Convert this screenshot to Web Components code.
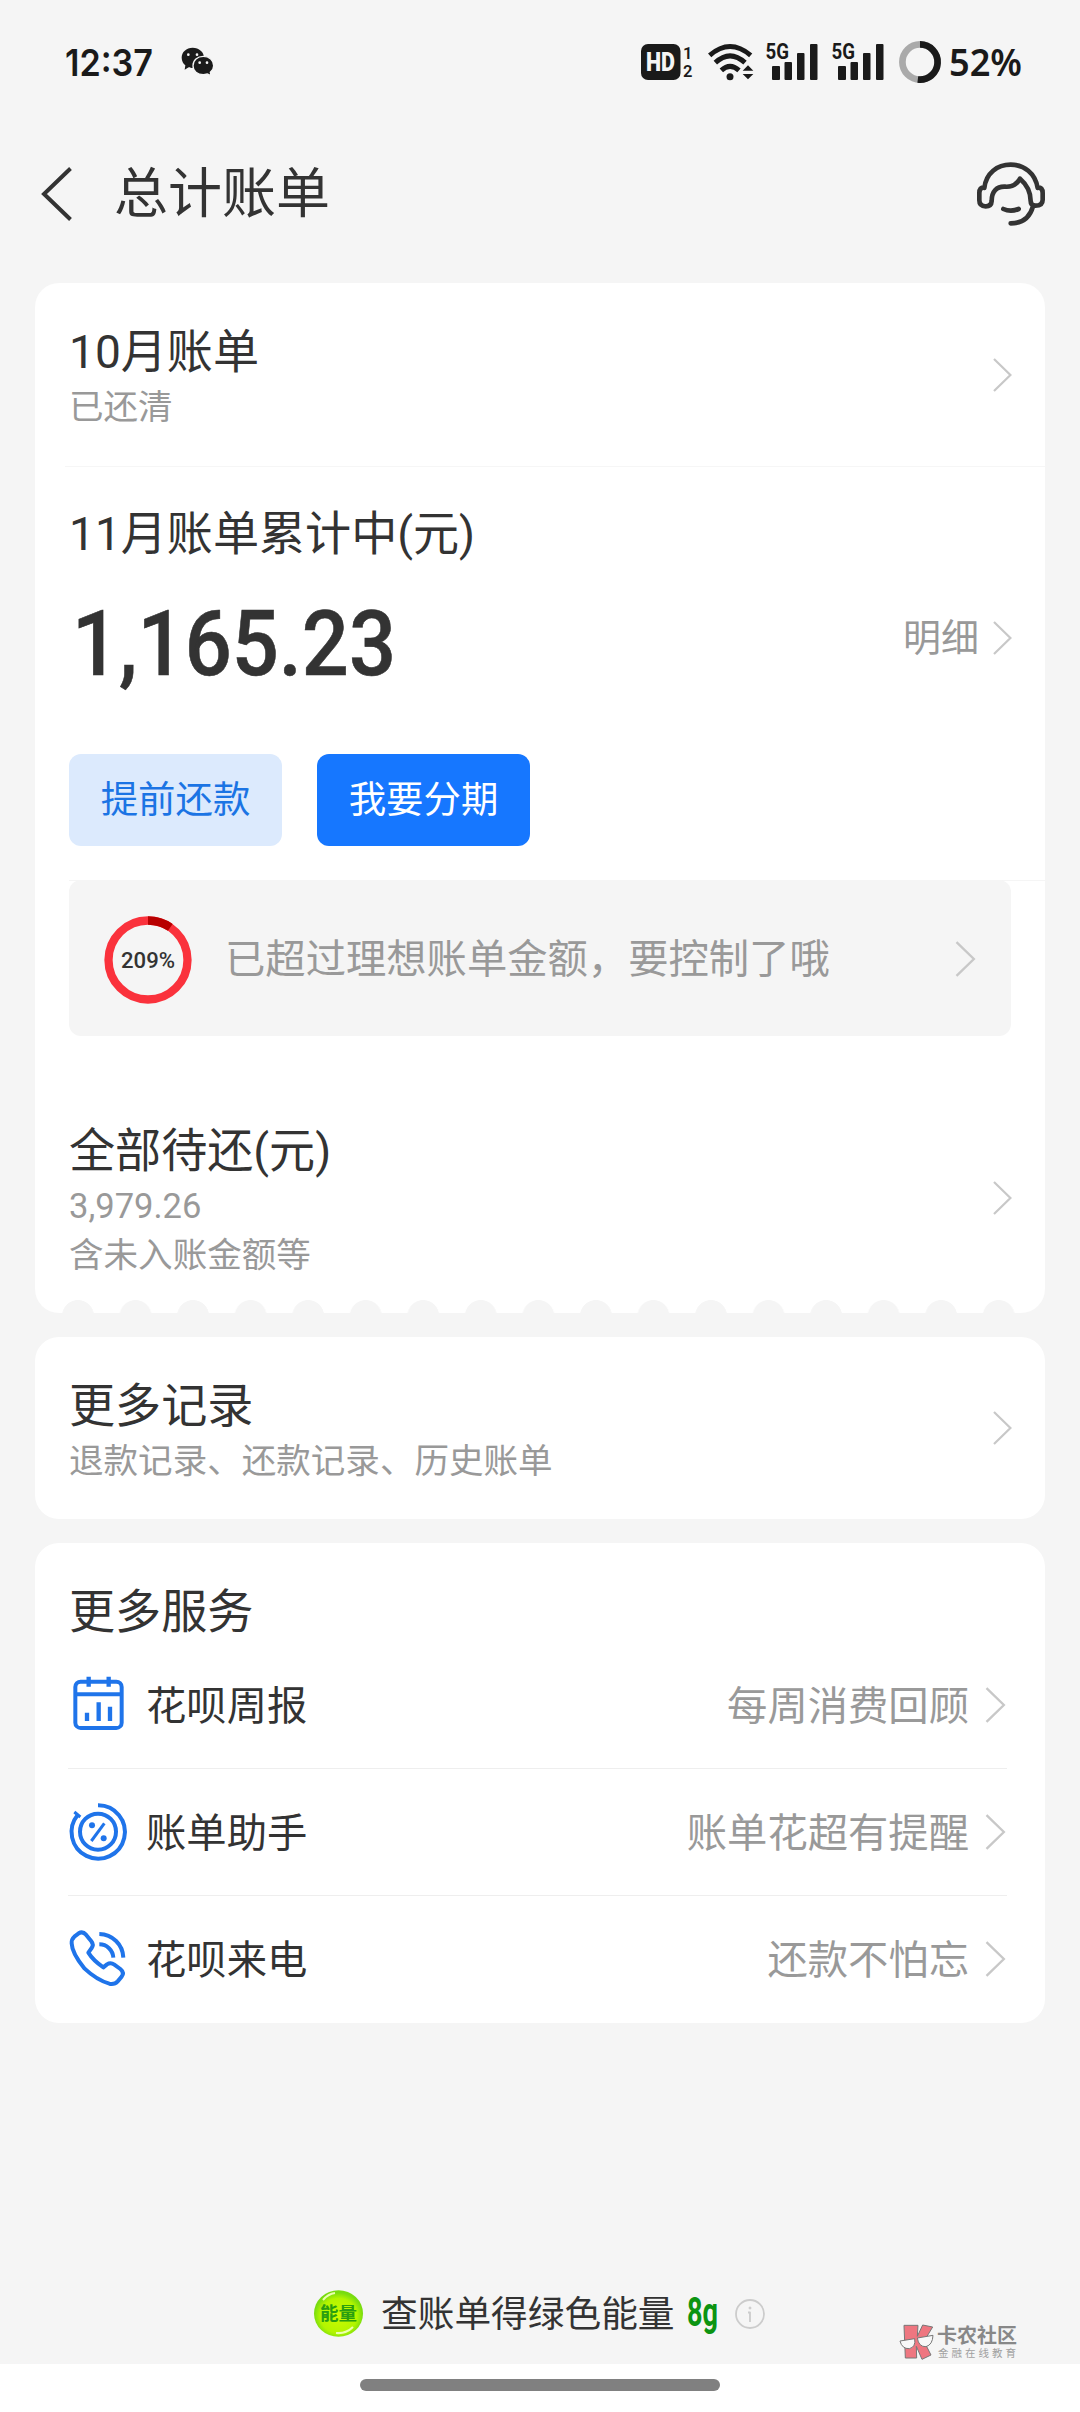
<!DOCTYPE html>
<html lang="zh-CN">
<head>
<meta charset="utf-8">
<title>总计账单</title>
<style>
body{margin:0;background:#f5f5f5;font-family:Roboto,"Noto Sans CJK SC",sans-serif;color:#333}
</style>
</head>
<body>
<bill-page></bill-page>
<script>
function define(name, html){
  const t=document.createElement('template');
  t.innerHTML='<style>*{box-sizing:border-box}svg{display:block;flex:none;overflow:visible}</style>'+html;
  customElements.define(name,class extends HTMLElement{
    constructor(){super();this.attachShadow({mode:'open'}).append(t.content.cloneNode(true));}
  });
}

define('chevron-icon',`<style>
:host{display:block;flex:none;width:19px;height:34px}
:host([large]){width:21px;height:36px}
svg{width:100%;height:100%}
</style><svg viewBox="0 0 19 34" fill="none" stroke="#c8c8c8" stroke-width="2.2"><path d="M1 1L17.4 17L1 33"/></svg>`);

define('signal-bars',`<style>:host{display:block;width:52px;height:40px}</style>
<svg width="52" height="40" viewBox="0 0 52 40" fill="#1a1a1a">
<text x="-.5" y="17" font-family="Roboto" font-weight="700" font-size="22" textLength="23.5" lengthAdjust="spacingAndGlyphs">5G</text>
<rect x="6" y="24" width="8" height="14" rx="1"/><rect x="18.5" y="20" width="7.5" height="18" rx="1"/><rect x="31" y="11" width="7.5" height="27" rx="1"/><rect x="44" y="2" width="7.5" height="36" rx="1"/></svg>`);

define('status-bar',`<style>
:host{display:flex;height:124px;padding:42px 54px 42px 66px;align-items:center;color:#1a1a1a}
.chat{margin-left:27px}
.hd{margin-left:426px}.wifi{margin-left:12px}.s1{margin-left:11px}.s2{margin-left:14px}.ring{margin-left:15px}.pct{margin-left:8px}
</style>
<svg width="88" height="40" fill="#1a1a1a"><text x="-1" y="33.7" font-family="Inter" font-weight="600" font-size="37.5" textLength="88" lengthAdjust="spacingAndGlyphs">12:37</text></svg>
<svg class="chat" width="34" height="30" viewBox="523 142 102 90"><path d="M558 144c-19 0-33 13-33 30 0 10 5 18 11 23l-2 13 12-7c4 2 8 2 12 2 20 0 34-14 34-31s-15-30-34-30z" fill="#1a1a1a"/><path d="M590 170c-18 0-31 12-31 28s13 27 31 27c4 0 8-1 12-2l11 5-2-10c6-5 10-12 10-20 0-16-13-28-31-28z" fill="#1a1a1a" stroke="#f5f5f5" stroke-width="4"/><g fill="#f5f5f5"><circle cx="545" cy="165" r="4"/><circle cx="571" cy="165" r="4"/><circle cx="579" cy="189" r="4"/><circle cx="601" cy="189" r="4"/></g></svg>
<svg class="hd" width="54" height="40" viewBox="0 0 54 40"><rect x="0" y="2" width="39.5" height="36" rx="7" fill="#1a1a1a"/><text x="5" y="29" font-family="Roboto" font-weight="900" font-size="25" fill="#f5f5f5" textLength="29" lengthAdjust="spacingAndGlyphs">HD</text><g font-family="Roboto" font-weight="600" font-size="16.5" fill="#1a1a1a"><text x="42" y="17">1</text><text x="42" y="35">2</text></g></svg>
<svg class="wifi" width="48" height="40" viewBox="321 66 144 120" fill="none" stroke="#1a1a1a" stroke-width="15"><path d="M329 106Q390 53 452 106M346 128Q390 87 435 128M364 151Q390 127 417 151"/><g fill="#1a1a1a" stroke="none"><circle cx="390" cy="170" r="10.5"/><path d="M444 136l16 16h-32zM428 162h32l-16 16z"/></g></svg>
<signal-bars class="s1"></signal-bars><signal-bars class="s2"></signal-bars>
<svg class="ring" width="42" height="42" viewBox="0 0 42 42" fill="none" stroke-width="6.7"><circle cx="21" cy="21" r="17.6" stroke="#aaa"/><path d="M21 3.4a17.6 17.6 0 1 1-2.2 35.06" stroke="#1a1a1a"/></svg>
<svg class="pct" width="74" height="40" fill="#1a1a1a"><text x="0" y="34" font-family="Noto Sans" font-weight="600" font-size="37" textLength="73" lengthAdjust="spacingAndGlyphs">52%</text></svg>
`);

define('nav-header',`<style>
:host{display:flex;height:159px;padding:0 34px 19px 41px;align-items:center}
h1{margin:2px auto 0 42px;font-size:54px;font-weight:400;line-height:80px}
</style>
<svg width="31" height="54" viewBox="0 0 31 54" fill="none" stroke="#333" stroke-width="4"><path d="M29.5 1.5L3 27L29.5 52.5"/></svg>
<h1>总计账单</h1>
<svg width="70" height="70" viewBox="1128 418 210 210" fill="none" stroke="#333" stroke-width="14" stroke-linecap="round" stroke-linejoin="round"><path d="M1153 505C1158 460 1192 435 1232 435S1306 460 1313 505M1153 503Q1138 503 1138 520V542Q1138 560 1157 560Q1174 560 1175 544C1175 515 1190 500 1215 501C1240 503 1252 492 1260 477C1281 495 1292 520 1292 544Q1292 558 1306 558Q1328 558 1328 540V520Q1328 503 1313 503M1299 560C1290 592 1268 611 1232 611M1210 568Q1232 578 1256 568"/></svg>`);

define('white-card',`<style>
:host{display:block;margin:0 35px 24px;background:#fff;border-radius:24px;overflow:hidden}
:host([scalloped]){background:radial-gradient(circle at 28.8px 16px,#f5f5f5 15.6px,transparent 16.2px) 14.2px 100%/57.55px 13px repeat-x,#fff}
</style><slot></slot>`);

define('bill-entry',`<style>
:host{display:flex;justify-content:space-between;align-items:center;padding:0 33px 0 34px}
.t{font-size:46.08px;line-height:60px;padding-top:4px}
.s{display:block;color:#999;font-size:34.56px;line-height:48px;margin-top:1px}
</style><div><div class="t"><slot name="title"></slot></div><div class="s"><slot></slot></div></div><chevron-icon></chevron-icon>`);

define('pill-button',`<style>
:host{display:block;width:213px;height:92px;border-radius:12px;background:#dceafd;color:#1b74e4;font-size:37.44px;line-height:92px;text-align:center}
:host([primary]){background:#1677ff;color:#fff}
</style><slot></slot>`);

define('bill-current',`<style>
:host{display:block;height:287px;padding:37px 33px 0 34px}
.t{font-size:46.08px;line-height:60px}
.row{display:flex;height:100px;margin-top:30px;align-items:center}
.row svg{margin-right:auto}
.more{color:#999;font-size:38px;line-height:48px;margin:0 14px 13px 0}
chevron-icon{margin-bottom:13px}
</style><div class="t"><slot name="title"></slot></div>
<div class="row"><svg width="330" height="100" fill="#333"><text x="3" y="81" font-family="Roboto" font-weight="500" font-size="90.5" stroke="#333" stroke-width=".6" textLength="324" lengthAdjust="spacingAndGlyphs">1,165.23</text></svg><span class="more">明细</span><chevron-icon></chevron-icon></div>`);

define('limit-notice',`<style>
:host{display:block;padding:0 0 0 34px;margin-top:34px}
.edge{height:1px;background:#f5f5f5}
.box{display:flex;align-items:center;height:156px;margin:-1px 34px 0 0;background:#f5f5f5;border-radius:12px;padding:0 35px;color:#999;font-size:40.32px;line-height:56px}
svg{margin-top:4px}
span{margin:3px auto 0 33px}
chevron-icon{margin-top:1px}
</style><div class="edge"></div><div class="box"><svg width="88" height="88" viewBox="0 0 88 88" fill="none" stroke-width="8.3"><circle cx="44" cy="44" r="39.5" stroke="#fa323c"/><path d="M44 4.5A39.5 39.5 0 0 1 66.3 11.4" stroke="#b80000"/><text x="44" y="51.8" text-anchor="middle" fill="#333" font-family="Roboto" font-weight="500" font-size="22.5" textLength="54" lengthAdjust="spacingAndGlyphs">209%</text></svg><span><slot></slot></span><chevron-icon large></chevron-icon></div>`);

define('service-row',`<style>
:host{display:flex;align-items:center;height:127px;margin:0 38px 0 33px;border-bottom:1px solid #eee;font-size:40.32px;line-height:56px}
:host([last]){border-color:transparent}
span{padding-top:3px}
.l{margin:0 auto 0 18px}.r{color:#999;margin-right:16px}
chevron-icon{margin-right:1px}
</style><slot name="icon"></slot><span class="l"><slot></slot></span><span class="r"><slot name="note"></slot></span><chevron-icon large></chevron-icon>`);

define('calendar-icon',`<style>:host{display:block}</style><svg width="60" height="60" viewBox="114 435 180 180" fill="none" stroke="#1f74ea" stroke-width="12"><rect x="136" y="455" width="139" height="139" rx="16"/><path d="M136 493H275"/><path stroke-width="13" d="M176 440V470M236 440V470M171 548V573M206 517V573M240 530V573"/></svg>`);
define('percent-icon',`<style>:host{display:block}</style><svg width="60" height="60" viewBox="114 816 180 180" fill="none" stroke="#1f74ea" stroke-width="12"><circle cx="204" cy="905" r="54"/><path d="M204 826A80 80 0 1 1 143 855"/><path d="M133 846L151 861" stroke-width="9"/><path stroke-width="9" d="M223 880L184 933"/><g fill="#1f74ea" stroke="none"><circle cx="186" cy="886" r="9"/><circle cx="221" cy="925" r="9"/></g></svg>`);
define('call-icon',`<style>:host{display:block}</style><svg width="60" height="60" viewBox="114 1197 180 180" fill="none" stroke="#1f74ea" stroke-width="12" stroke-linejoin="round"><path d="M208 1212A73 73 0 0 1 280 1283M208 1243A42 42 0 0 1 250 1283"/><path d="M133 1220L146 1210Q158 1203 168 1214L184 1234Q192 1244 185 1254L175 1268Q190 1292 220 1312L231 1303Q242 1296 253 1304L271 1317Q284 1328 275 1340L263 1354Q254 1364 238 1361Q200 1350 164 1316Q126 1270 125 1240Q124 1228 133 1220Z"/></svg>`);

define('energy-footer',`<style>
:host{display:flex;align-items:center;height:100px;padding-left:314px;font-size:36.7px;line-height:48px}
.t{margin:1px 0 0 17px}.g{margin-left:10px}.i{margin-left:14px}
</style>
<svg width="50" height="50" viewBox="0 0 50 50"><defs><radialGradient id="g" cx=".5" cy=".55" r=".5"><stop offset="0" stop-color="#cdfa00"/><stop offset=".75" stop-color="#b2f500"/><stop offset="1" stop-color="#78dc10"/></radialGradient></defs><ellipse cx="24.5" cy="24.5" rx="24.5" ry="23.2" fill="url(#g)"/><path d="M9 11Q14 5 21 4M22 44Q32 45 39 38" stroke="#eaffb0" stroke-width="2" fill="none"/><text x="24.5" y="31" text-anchor="middle" font-family="Noto Sans CJK SC" font-weight="700" font-size="18.5" fill="#2a9e10">能量</text></svg>
<span class="t">查账单得绿色能量</span>
<svg class="g" width="36" height="50" fill="#0c9412"><text x="2" y="37" font-family="Roboto" font-weight="700" font-size="40" textLength="31" lengthAdjust="spacingAndGlyphs">8g</text></svg>
<svg class="i" width="30" height="30" viewBox="0 0 30 30" fill="none" stroke="#ccc" stroke-width="1.8"><circle cx="15" cy="15" r="14"/><path d="M15 13V23M13 13.5H15.5"/><circle cx="15" cy="9" r="1" fill="#ccc" stroke-width="1"/></svg>`);

define('site-watermark',`<style>
:host{display:flex;position:absolute;left:899px;top:2323px;gap:3px;color:#888;font-family:"Noto Sans CJK SC",sans-serif}
b{display:block;font-size:20px;line-height:24px}
small{display:block;font-size:10.5px;line-height:14px;letter-spacing:3px;color:#a0a0a0;margin:-1px 0 0 1px}
</style><svg width="35" height="38" viewBox="119 100 105 114" stroke="#777" stroke-width="3"><path d="M134 107H176L174 140L190 106L220 112L194 155L215 196L188 209L171 170L172 205H138Z" fill="#ee7680"/><path d="M122 154L166 147Q170 172 150 177Q128 178 122 154ZM174 145L221 137Q220 165 200 171Q178 172 174 145Z" fill="#f8f8f8"/></svg><div><b>卡农社区</b><small>金融在线教育</small></div>`);

define('home-indicator',`<style>:host{display:flex;justify-content:center;height:48px;background:#fff;padding-top:15px}i{width:360px;height:12px;border-radius:6px;background:#808080}</style><i></i>`);

define('bill-page',`<style>
:host{display:flex;flex-direction:column;width:1080px;height:2412px;background:#f5f5f5;overflow:hidden}
.a{height:184px;padding-bottom:1px}
.line{height:1px;margin:-1px 0 0 30px;background:#f6f6f6}
.btns{display:flex;gap:35px;padding-left:34px}
.c{margin-top:46px;height:231px}
.d{height:182px}
h2{margin:0;padding:39px 0 0 34px;font-size:46.08px;font-weight:400;line-height:60px}
.last{margin-bottom:auto}
.n{display:block}
.u{display:block;margin-top:1px}
</style>
<status-bar></status-bar>
<nav-header></nav-header>
<white-card scalloped>
 <bill-entry class="a"><span slot="title">10月账单</span>已还清</bill-entry>
 <div class="line"></div>
 <bill-current><span slot="title">11月账单累计中(元)</span></bill-current>
 <div class="btns"><pill-button>提前还款</pill-button><pill-button primary>我要分期</pill-button></div>
 <limit-notice>已超过理想账单金额，要控制了哦</limit-notice>
 <bill-entry class="c"><span slot="title">全部待还(元)</span><span class="n">3,979.26</span><span class="u">含未入账金额等</span></bill-entry>
</white-card>
<white-card><bill-entry class="d"><span slot="title">更多记录</span>退款记录、还款记录、历史账单</bill-entry></white-card>
<white-card class="last">
 <h2>更多服务</h2>
 <service-row><calendar-icon slot="icon"></calendar-icon>花呗周报<span slot="note">每周消费回顾</span></service-row>
 <service-row><percent-icon slot="icon"></percent-icon>账单助手<span slot="note">账单花超有提醒</span></service-row>
 <service-row last><call-icon slot="icon"></call-icon>花呗来电<span slot="note">还款不怕忘</span></service-row>
</white-card>
<energy-footer></energy-footer>
<home-indicator></home-indicator>
<site-watermark></site-watermark>`);
</script>
</body>
</html>
